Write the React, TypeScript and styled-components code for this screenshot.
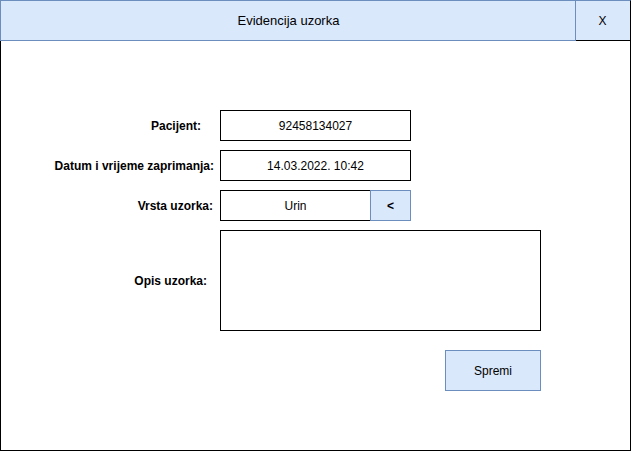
import React from "react";
import styled, { createGlobalStyle } from "styled-components";

const Global = createGlobalStyle`
  html, body { margin: 0; padding: 0; background: #ffffff; }
  body { font-family: "Liberation Sans", Arial, sans-serif; font-size: 12px; color: #000; }
  * { box-sizing: border-box; }
`;

const Window = styled.div`
  width: 631px;
  height: 451px;
  display: flex;
  flex-direction: column;
  background: #fff;
`;

const Header = styled.div`
  display: flex;
  height: 41px;
`;

const Title = styled.div`
  width: 576px;
  height: 41px;
  background: #dae8fc;
  border: 1px solid #6c8ebf;
  display: flex;
  align-items: center;
  justify-content: center;
  font-size: 13px;
  padding-left: 1px;
`;

const Close = styled.div`
  width: 55px;
  height: 41px;
  background: #dae8fc;
  border-top: 1px solid #6c8ebf;
  border-right: 1px solid #000;
  border-bottom: 1px solid #000;
  display: flex;
  align-items: center;
  justify-content: center;
  font-size: 12px;
  padding-right: 1px;
`;

const Body = styled.div`
  flex: 1;
  border-left: 1px solid #000;
  border-right: 1px solid #000;
  border-bottom: 1px solid #000;
  padding-top: 69px;
  display: flex;
  flex-direction: column;
`;

const Form = styled.div`
  display: grid;
  grid-template-columns: 219px 321px;
  row-gap: 9px;
`;

const Label = styled.div<{ $pad: number }>`
  display: flex;
  align-items: center;
  justify-content: flex-end;
  padding-right: ${(p) => p.$pad}px;
  font-weight: bold;
  font-size: 12px;
`;

const FieldRow = styled.div`
  display: flex;
`;

const Field = styled.div<{ $w: number; $h?: number }>`
  width: ${(p) => p.$w}px;
  height: ${(p) => p.$h ?? 31}px;
  border: 1px solid #000;
  background: #fff;
  display: flex;
  align-items: center;
  justify-content: center;
  font-size: 12px;
`;

const PickButton = styled.div`
  width: 41px;
  height: 31px;
  margin-left: -1px;
  border: 1px solid #6c8ebf;
  background: #dae8fc;
  display: flex;
  align-items: center;
  justify-content: center;
  font-weight: bold;
  font-size: 12px;
`;

const Actions = styled.div`
  width: 540px;
  display: flex;
  justify-content: flex-end;
  margin-top: 19px;
`;

const SaveButton = styled.div`
  width: 96px;
  height: 41px;
  border: 1px solid #6c8ebf;
  background: #dae8fc;
  display: flex;
  align-items: center;
  justify-content: center;
  font-size: 12px;
`;

export default function App() {
  return (
    <>
      <Global />
      <Window>
        <Header>
          <Title>Evidencija uzorka</Title>
          <Close>X</Close>
        </Header>
        <Body>
          <Form>
            <Label $pad={19}>Pacijent:</Label>
            <FieldRow>
              <Field $w={191}>92458134027</Field>
            </FieldRow>
            <Label $pad={6}>Datum i vrijeme zaprimanja:</Label>
            <FieldRow>
              <Field $w={191}>14.03.2022. 10:42</Field>
            </FieldRow>
            <Label $pad={7}>Vrsta uzorka:</Label>
            <FieldRow>
              <Field $w={151}>Urin</Field>
              <PickButton>&lt;</PickButton>
            </FieldRow>
            <Label $pad={13}>Opis uzorka:</Label>
            <FieldRow>
              <Field $w={321} $h={101} />
            </FieldRow>
          </Form>
          <Actions>
            <SaveButton>Spremi</SaveButton>
          </Actions>
        </Body>
      </Window>
    </>
  );
}
